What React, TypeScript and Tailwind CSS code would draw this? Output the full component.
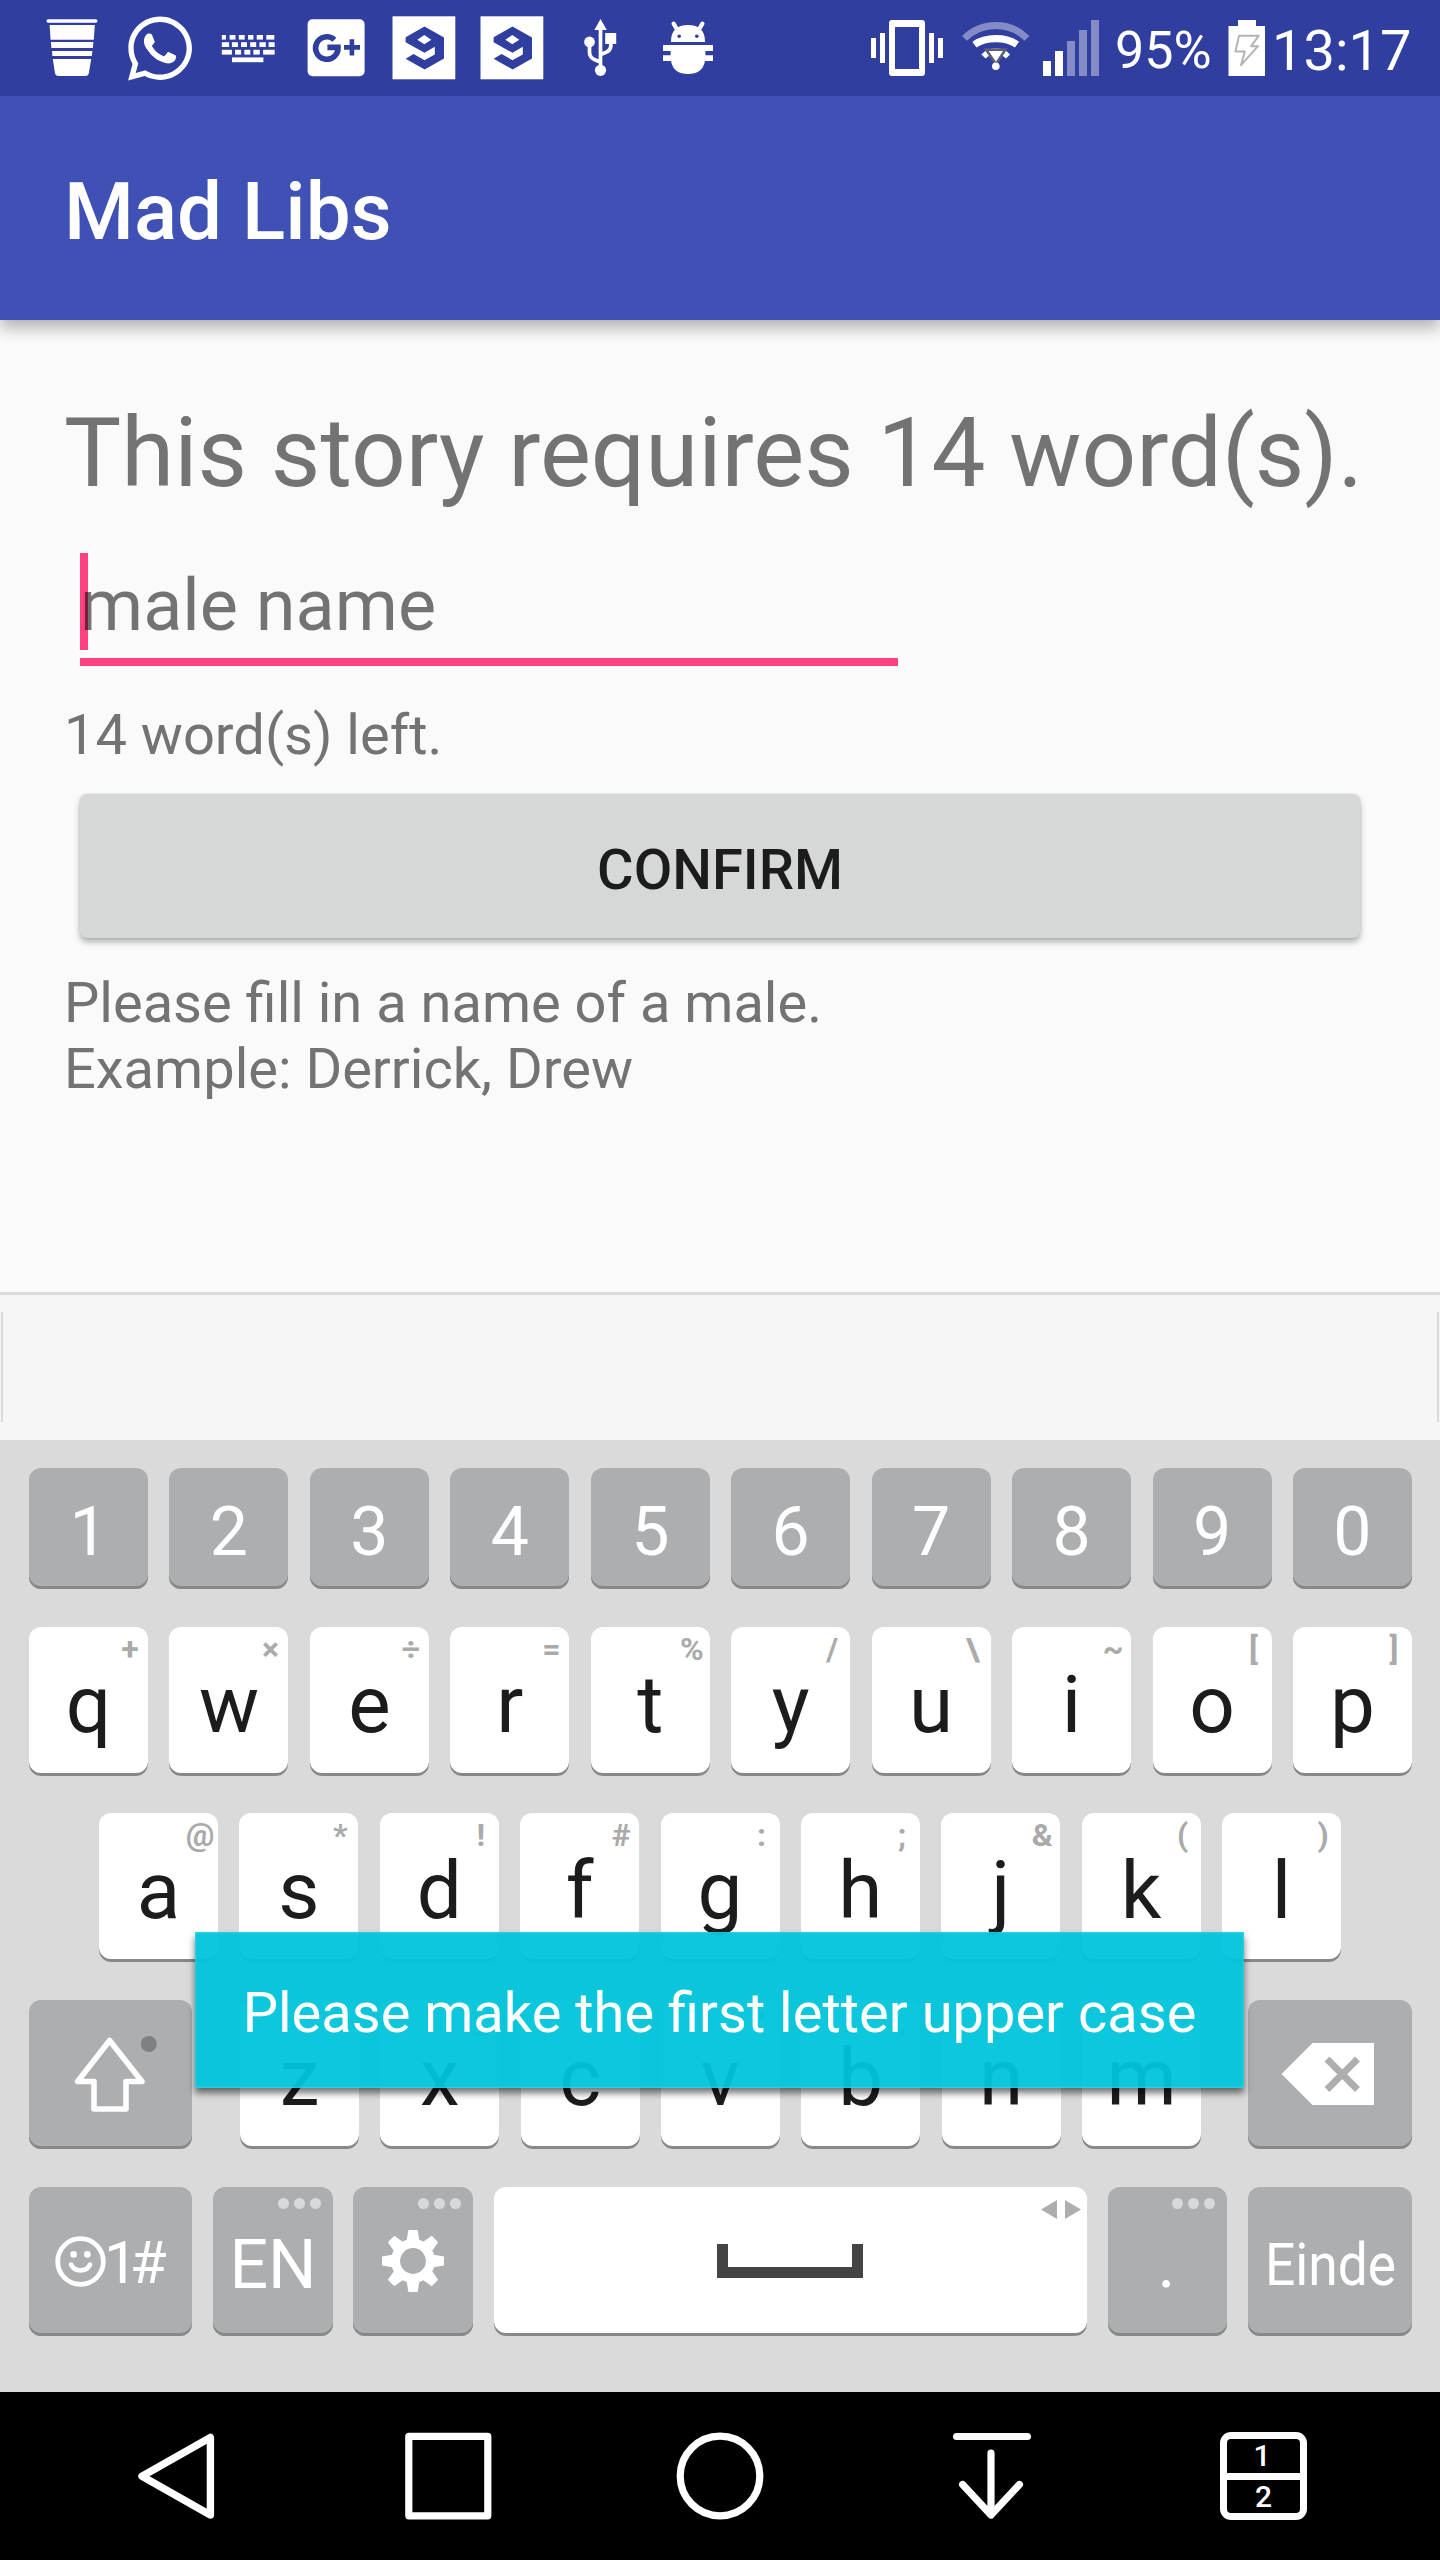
import type { ReactNode } from "react";
import { FaWhatsapp } from "react-icons/fa";

const BLUE = "#303f9f";

/* ---------- status bar ---------- */

function Cell({ children }: { children: ReactNode }) {
  return (
    <svg viewBox="0 0 88 96" className="h-[96px] w-[88px] shrink-0" fill="#fff">
      {children}
    </svg>
  );
}

function CupIcon() {
  return (
    <Cell>
      <rect x="18.5" y="19.3" width="51" height="3.4" rx="1.7" />
      <path d="M21.6 25H66.8L65.8 39.7H22.6ZM22.9 42H65.4L64.9 48H23.4ZM24 51H64.4L63.8 56H24.4ZM24.8 59H63.2L60.8 73.6Q60.4 76 57.6 76H30.2Q27.4 76 27 73.6Z" />
    </Cell>
  );
}

function KeyboardIcon() {
  const rows: [number, number, number[][]][] = [
    [35, 4.6, [[17.8, 4.1], [25.6, 5.9], [34.8, 5.9], [44, 5.4], [52.7, 6.3], [62.3, 8]]],
    [42.2, 4.8, [[17.8, 7.3], [27.9, 6], [37, 6], [46.2, 6], [55.4, 6.4], [64.6, 6]]],
    [49.8, 4.8, [[17.8, 10.1], [31.1, 6], [40.3, 6], [49.4, 6.4], [59.1, 11.5]]],
    [57.4, 4.8, [[28, 31.4]]],
  ];
  return (
    <Cell>
      {rows.map(([y, h, keys]) =>
        keys.map(([x, w]) => <rect key={`${y}-${x}`} x={x} y={y} width={w} height={h} />)
      )}
    </Cell>
  );
}

function GooglePlusIcon() {
  return (
    <Cell>
      <rect x="15.6" y="19.3" width="57" height="57" rx="5" />
      <path d="M42.4 39.8A11.2 11.2 0 1 0 46 47.4H35.4" fill="none" stroke={BLUE} strokeWidth="5.6" />
      <path d="M52 47.4H68M59.9 39.2V55.4" fill="none" stroke={BLUE} strokeWidth="4.6" />
    </Cell>
  );
}

function NineIcon() {
  return (
    <Cell>
      <rect x="12.5" y="16.3" width="62.8" height="63" />
      <path
        fill={BLUE}
        fillRule="evenodd"
        d="M44.5 26.5L64 37.5V58.5L44.7 69.4L25.6 58.8L33.6 54L44.5 60.2L54.8 54.4V46.8L44.5 52.8L25.6 42.2V37.3ZM44.3 35L37.3 39.7L44.3 44.3L51.3 39.7Z"
      />
    </Cell>
  );
}

function UsbIcon() {
  return (
    <Cell>
      <path d="M44.5 19L50.8 30H38.4Z" />
      <circle cx="33.5" cy="42" r="5.4" />
      <circle cx="44.5" cy="70.3" r="5.6" />
      <rect x="49.2" y="33" width="11" height="11" />
      <path d="M44.5 28V66M33.5 45V52Q33.5 57 38 59.4Q41 61 44.5 62M54.8 43V46Q54.8 50 51 51.8Q48 53.2 44.5 54.4" fill="none" stroke="#fff" strokeWidth="3.7" />
    </Cell>
  );
}

function DebugIcon() {
  return (
    <Cell>
      <path d="M29.6 23.6L33.6 30.5M58.4 23.6L54.4 30.5" stroke="#fff" strokeWidth="4.2" strokeLinecap="round" />
      <path d="M27 42Q27 25 44 25T61 42Z" />
      <path d="M19 45H69V51H61.4V55.2H69V61H61Q58.6 74 44 74T27 61H19V55.2H26.6V51H19Z" />
      <circle cx="35.2" cy="36.3" r="1.8" fill={BLUE} />
      <circle cx="52.8" cy="36.3" r="1.8" fill={BLUE} />
    </Cell>
  );
}

function StatusBar() {
  return (
    <div className="flex h-[96px] items-start bg-[#303f9f] pl-[28px] text-white">
      <CupIcon />
      <div className="flex h-[96px] w-[88px] shrink-0 items-center justify-center">
        <FaWhatsapp className="h-[73px] w-[64px]" />
      </div>
      <KeyboardIcon />
      <GooglePlusIcon />
      <NineIcon />
      <NineIcon />
      <UsbIcon />
      <DebugIcon />

      <svg viewBox="0 0 72 96" className="ml-[139px] h-[96px] w-[72px] shrink-0" fill="#fff">
        <path d="M0 38h5v20h-5zM9 33h5v30h-5zM58 33h5v30h-5zM67 38h5v20h-5z" />
        <path fillRule="evenodd" d="M21 20H51Q54 20 54 23V73Q54 76 51 76H21Q18 76 18 73V23Q18 20 21 20ZM24 27V69H48V27Z" />
      </svg>
      <svg viewBox="0 0 68 96" className="ml-[19px] h-[96px] w-[68px] shrink-0" fill="none">
        <path d="M2.5 38.4Q15.5 25.4 33.8 25.4T65 38.4" stroke="#838cc6" strokeWidth="7" />
        <path d="M12.4 44.6Q21 38.6 33.8 38.6T55 44.6" stroke="#fff" strokeWidth="7.2" />
        <path d="M21.5 56.5Q27 51 33.8 51T46 56.5" stroke="#fff" strokeWidth="6" />
        <path d="M24 49.6H43.4L34 64Z" fill="#fff" stroke="#5b5f78" strokeWidth="2.6" />
        <circle cx="33.8" cy="66.3" r="3.8" fill="#fff" />
      </svg>
      <svg viewBox="0 0 56 96" className="ml-[13px] h-[96px] w-[56px] shrink-0" fill="#fff">
        <path d="M0 61h8v15h-8zM12 51h8v25h-8z" />
        <path d="M24 41h8v35h-8zM36 30h8v46h-8zM48 20h8v56h-8z" fill="#838cc6" />
      </svg>
      <span className="ml-[16px] w-[100px] text-[52px] leading-[101px] whitespace-nowrap">95%</span>
      <svg viewBox="0 0 37 96" className="ml-[13px] h-[96px] w-[37px] shrink-0" fill="#fff">
        <path d="M10 20H28V26H37V76H0.5V26H10Z" />
        <path d="M11 35.8H30.6L23.2 46.2H30L13 65.2L16.8 51.6H7.4Z" fill="none" stroke="#b4b4b4" strokeWidth="2" strokeLinejoin="round" />
      </svg>
      <span className="ml-[7px] text-[56px] leading-[102px] whitespace-nowrap">13:17</span>
    </div>
  );
}

/* ---------- keyboard ---------- */

function Key({ gray, className, children }: { gray?: boolean; className: string; children?: ReactNode }) {
  return (
    <div
      className={`relative flex shrink-0 justify-center rounded-[12px] ${
        gray
          ? "bg-[#adaeb0] text-white shadow-[inset_0_-3px_0_#878888]"
          : "bg-white text-[#1c1c1c] shadow-[inset_0_-3px_0_#878888]"
      } ${className}`}
    >
      {children}
    </div>
  );
}

function LetterKey({ letter, hint }: { letter: string; hint: string }) {
  return (
    <Key className="h-[149px] w-[119px]">
      <span className="text-[80px] leading-[157px]">{letter}</span>
      <span className="absolute top-0 right-0 w-[36px] text-center text-[32px] leading-[45px] font-bold text-[#aaaaaa]">
        <span className="-mx-4">{hint}</span>
      </span>
    </Key>
  );
}

function Dots() {
  return (
    <div className="absolute top-[11px] right-[12px] flex gap-[5px]">
      <i className="size-[11px] rounded-full bg-[#d8d9db]" />
      <i className="size-[11px] rounded-full bg-[#d8d9db]" />
      <i className="size-[11px] rounded-full bg-[#d8d9db]" />
    </div>
  );
}

const pairs = (letters: string, hints: string) => [...letters].map((l, i) => [l, hints[i]]);
const ROW1 = pairs("qwertyuiop", "+×÷=%/\\~[]");
const ROW2 = pairs("asdfghjkl", "@*!#:;&()");
const ROW3 = pairs("zxcvbnm", "-_\"',.?");

function Keyboard() {
  return (
    <div className="relative h-[952px] bg-[#dadada] px-[29px] pt-[28px]">
      <div className="flex w-[1383px] justify-between">
        {[..."1234567890"].map((d) => (
          <Key key={d} gray className="h-[121px] w-[119px]">
            <span className="text-[68px] leading-[128px]">{d}</span>
          </Key>
        ))}
      </div>
      <div className="mt-[38px] flex w-[1383px] justify-between">
        {ROW1.map(([l, h]) => (
          <LetterKey key={l} letter={l} hint={h} />
        ))}
      </div>
      <div className="mt-[37px] flex w-[1383px] justify-between pr-[71px] pl-[70px]">
        {ROW2.map(([l, h]) => (
          <LetterKey key={l} letter={l} hint={h} />
        ))}
      </div>
      <div className="mt-[38px] flex w-[1383px]">
        <Key gray className="h-[149px] w-[163px]">
          <svg viewBox="0 0 163 149" className="h-[149px] w-[163px]" fill="none">
            <path d="M80.6 40.5L48.6 81.5H65V109H97V81.5H113Z" stroke="#fff" strokeWidth="5.6" strokeLinejoin="round" />
            <circle cx="119.8" cy="44" r="8" fill="#7f8081" />
          </svg>
        </Key>
        <div className="mr-[47px] ml-[48px] flex w-[961px] justify-between">
          {ROW3.map(([l, h]) => (
            <LetterKey key={l} letter={l} hint={h} />
          ))}
        </div>
        <Key gray className="h-[149px] w-[164px]">
          <svg viewBox="0 0 164 149" className="h-[149px] w-[164px]" fill="#fff">
            <path d="M33.5 74L64.5 43H126V105H64.5Z" />
            <path d="M79 59L109.5 89.5M109.5 59L79 89.5" stroke="#adaeb0" strokeWidth="6.8" />
          </svg>
        </Key>
      </div>
      <div className="mt-[38px] flex w-[1383px] justify-between">
        <Key gray className="h-[149px] w-[163px]">
          <div className="flex w-full pl-[26px]">
            <svg viewBox="0 0 51 149" className="h-[149px] w-[51px] shrink-0" fill="none">
              <circle cx="25.5" cy="74.5" r="22.8" stroke="#fff" strokeWidth="4.8" />
              <circle cx="18.6" cy="67.4" r="3.3" fill="#fff" />
              <circle cx="32.4" cy="67.4" r="3.3" fill="#fff" />
              <path d="M16 77.6Q19 83.4 25.5 83.4T35 77.6" stroke="#fff" strokeWidth="4.6" strokeLinecap="round" />
            </svg>
            <span className="-ml-[2px] text-[60px] leading-[151px] tracking-[-8px]">1#</span>
          </div>
        </Key>
        <Key gray className="h-[149px] w-[120px]">
          <span className="text-[68px] leading-[157px]">EN</span>
          <Dots />
        </Key>
        <Key gray className="-ml-px h-[149px] w-[120px]">
          <svg viewBox="-60 -74 120 149" className="h-[149px] w-[120px]" fill="#fff">
            {[0, 45, 90, 135, 180, 225, 270, 315].map((a) => (
              <path key={a} d="M-6.8 -18L-4.6 -31H4.6L6.8 -18Z" transform={`rotate(${a})`} />
            ))}
            <circle r="17.4" fill="none" stroke="#fff" strokeWidth="9" />
          </svg>
          <Dots />
        </Key>
        <Key className="h-[149px] w-[593px]">
          <div className="mt-[57px] mr-[2px] h-[34px] w-[146px] border-x-[11px] border-b-[11px] border-[#444444]" />
          <svg viewBox="0 0 40 19" className="absolute top-[13px] right-[6px] h-[19px] w-[40px]" fill="#adaeb0">
            <path d="M0 9.5L16 0V19ZM24 0L40 9.5L24 19Z" />
          </svg>
        </Key>
        <Key gray className="h-[149px] w-[119px]">
          <span className="mr-[2px] text-[68px] leading-[155px]">.</span>
          <Dots />
        </Key>
        <Key gray className="h-[149px] w-[164px]">
          <span className="ml-px origin-center scale-x-[0.905] text-[59px] leading-[155px]">Einde</span>
        </Key>
      </div>

      <div className="absolute top-[492px] left-[195px] h-[156px] w-[1049px] bg-[#00c4db]/95 text-center text-[56px] leading-[163px] whitespace-nowrap text-white shadow-[0_5px_7px_rgba(0,0,0,0.55),inset_0_0_3px_rgba(255,255,255,0.35)]">
        Please make the first letter upper case
      </div>
    </div>
  );
}

/* ---------- navigation bar ---------- */

function NavBar() {
  return (
    <div className="flex h-[168px] bg-black pt-[40px] pl-[137px]">
      <svg viewBox="0 0 88 88" className="size-[88px]" fill="none" stroke="#fff" strokeWidth="7.4" strokeLinejoin="round">
        <path d="M73.4 5.5V83L5 44.2Z" />
      </svg>
      <svg viewBox="0 0 88 88" className="ml-[179px] size-[88px]" fill="none" stroke="#fff" strokeWidth="7.2" strokeLinejoin="round">
        <rect x="4.8" y="4.4" width="79" height="79.4" />
      </svg>
      <svg viewBox="0 0 88 88" className="ml-[184px] size-[88px]" fill="none" stroke="#fff" strokeWidth="7.2">
        <circle cx="44" cy="44" r="39.8" />
      </svg>
      <svg viewBox="0 0 88 88" className="ml-[183px] size-[88px]" fill="none" stroke="#fff" strokeWidth="7.2" strokeLinecap="round" strokeLinejoin="round">
        <path d="M9.6 4.5H80.4M44 21V81M15.6 52.5L44 83L72.4 52.5" />
      </svg>
      <div className="relative ml-[185px] flex h-[88px] w-[87px] flex-col items-center rounded-[11px] border-[7px] border-white text-[30px] leading-none font-medium text-white">
        <span className="flex h-[34px] w-full items-center justify-center pr-[3px]">1</span>
        <span className="h-[7px] w-full shrink-0 bg-white" />
        <span className="flex h-[33px] w-full items-center justify-center">2</span>
      </div>
    </div>
  );
}

export default function App() {
  return (
    <div className="flex h-[2560px] w-[1440px] flex-col overflow-hidden bg-[#fafafa] font-[Roboto,sans-serif]">
      <StatusBar />
      <header className="relative h-[224px] bg-[#3f51b5] px-[64px] shadow-[0_7px_16px_rgba(0,0,0,0.32)] [clip-path:inset(0_0_-40px_0)]">
        <h1 className="text-[80px] leading-[232px] font-medium text-white">Mad Libs</h1>
      </header>

      <main className="flex h-[972px] flex-col px-[64px] pt-[77px] text-[56px] leading-[66px] text-[#737373]">
        <p className="text-[96px] leading-[113px] whitespace-nowrap">This story requires 14 word(s).</p>
        <div className="relative mt-[43px] ml-[16px] h-[113px] w-[818px] border-b-[8px] border-[#ff4081] pt-[11px]">
          <span className="absolute top-0 left-0 h-[97px] w-[8px] bg-[#ff4081]" />
          <span className="relative block text-[72px] leading-[84px] text-black/54">male name</span>
        </div>
        <p className="mt-[36px]">14 word(s) left.</p>
        <button className="mt-[26px] ml-[16px] h-[144px] w-[1280px] shrink-0 rounded-[7px] bg-[#d6d7d7] text-[56px] leading-[152px] font-medium text-[#1c1c1c] shadow-[0_4px_6px_rgba(0,0,0,0.3),0_0_3px_rgba(0,0,0,0.08)]">
          CONFIRM
        </button>
        <p className="mt-[32px]">
          Please fill in a name of a male.
          <br />
          Example: Derrick, Drew
        </p>
      </main>

      <div className="flex h-[148px] items-start justify-between border-t-[3px] border-[#dadada] bg-[#f5f5f5] px-px pt-[17px]">
        <span className="h-[110px] w-[2px] bg-[#dadada]" />
        <span className="h-[110px] w-[2px] bg-[#dadada]" />
      </div>
      <Keyboard />
      <NavBar />
    </div>
  );
}
